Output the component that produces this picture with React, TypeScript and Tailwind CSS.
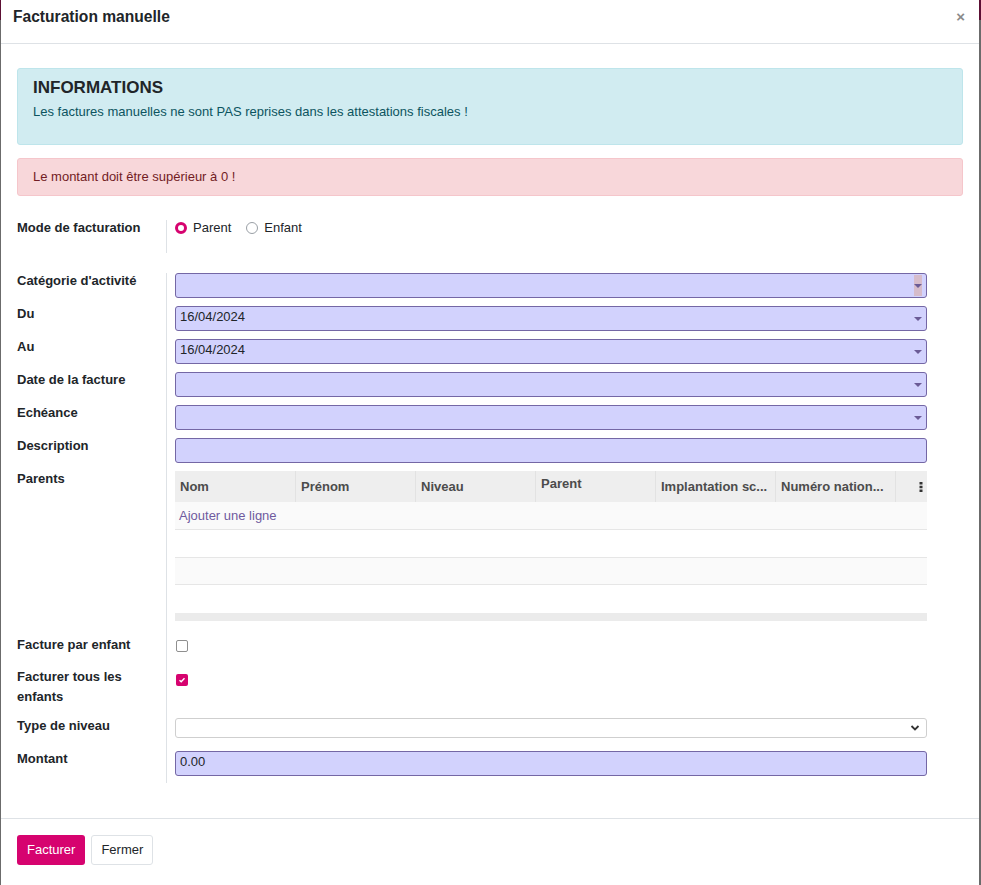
import React from 'react';

const font = { fontFamily: '"Liberation Sans", Arial, Helvetica, sans-serif' };

const Caret = ({ highlight }: { highlight?: boolean }) => (
  <div
    className={`absolute right-[4px] top-[1px] bottom-[1px] w-[8px] flex items-center justify-center ${
      highlight ? 'bg-[#d6bccb]' : ''
    }`}
  >
    <div className="w-0 h-0 border-l-[4px] border-r-[4px] border-t-[4px] border-l-transparent border-r-transparent border-t-[#6b5b96]" />
  </div>
);

const Field = ({ value, caret, highlight }: { value?: string; caret?: boolean; highlight?: boolean }) => (
  <div className="relative h-[25px] w-full rounded-[3px] border border-[#7467a5] bg-[#d2d2fd] pl-[4px] pt-[2px] text-[13px] leading-[15px] text-[#212529]">
    {value}
    {caret && <Caret highlight={highlight} />}
  </div>
);

const Row = ({
  label,
  h,
  children,
}: {
  label: React.ReactNode;
  h: string;
  children?: React.ReactNode;
}) => (
  <div className={`flex ${h}`}>
    <div className="w-[150px] shrink-0 border-r border-[#dee2e6] pr-2 text-[13px] font-bold text-[#212529] leading-[15px]">
      {label}
    </div>
    <div className="w-[760px] pl-2">{children}</div>
  </div>
);

const columns = ['Nom', 'Prénom', 'Niveau', 'Parent', 'Implantation sc...', 'Numéro nation...'];

const ParentsTable = () => (
  <div className="w-[752px]">
    <div className="flex h-[31px] bg-[#eeeeee] text-[13px] font-bold text-[#4c4c4c]">
      {columns.map((c, i) => (
        <div
          key={c}
          className={`w-[120px] pl-[5px] flex ${c === 'Parent' ? 'items-start pt-[5px] leading-[15px]' : 'items-center'} ${
            i > 0 ? 'border-l border-[#e2e2e2]' : ''
          }`}
        >
          {c}
        </div>
      ))}
      <div className="w-[32px] border-l border-[#e2e2e2] flex items-center justify-end pr-[4px]">
        <svg width="4" height="12" viewBox="0 0 4 12">
          <rect x="0.5" y="1" width="3" height="2.5" fill="#333" />
          <rect x="0.5" y="4.75" width="3" height="2.5" fill="#333" />
          <rect x="0.5" y="8.5" width="3" height="2.5" fill="#333" />
        </svg>
      </div>
    </div>
    <div className="h-[28px] bg-[#fafafa] border-b border-[#e6e6e6] flex items-center pl-[4px] text-[13px] text-[#6f5a9e]">
      Ajouter une ligne
    </div>
    <div className="h-[28px] bg-white border-b border-[#e6e6e6]" />
    <div className="h-[27px] bg-[#fafafa] border-b border-[#e6e6e6]" />
    <div className="h-[28px] bg-white" />
    <div className="h-[8px] bg-[#ebebeb]" />
  </div>
);

const Checkbox = ({ checked }: { checked?: boolean }) =>
  checked ? (
    <div className="w-[12px] h-[12px] rounded-[2px] bg-[#d6036f] flex items-center justify-center">
      <svg width="8" height="8" viewBox="0 0 8 8">
        <path d="M1.5 4.2 L3.2 5.8 L6.5 2.3" stroke="#fff" strokeWidth="1.4" fill="none" />
      </svg>
    </div>
  ) : (
    <div className="w-[12px] h-[12px] rounded-[2px] border border-[#8f8f8f] bg-white" />
  );

const App: React.FC = () => {
  return (
    <div className="relative w-[981px] h-[885px] bg-[#6b6b6b] overflow-hidden" style={font}>
      <div className="absolute top-0 left-0 right-0 h-[20px] bg-[#5c0f34]" />
      <div className="relative ml-[1px] w-[978px] h-[885px] bg-white flex flex-col">
        {/* header */}
        <div className="h-[44px] shrink-0 border-b border-[#dee2e6] flex items-start justify-between pl-3 pr-[14px] pt-[7px]">
          <h4 className="text-[15.6px] font-bold leading-[20px] text-[#212529]">Facturation manuelle</h4>
          <span className="text-[15px] font-bold text-[#8a8a8a] leading-[20px]">×</span>
        </div>

        {/* body */}
        <div className="flex-1 px-4 pt-6">
          <div className="rounded-[3px] border border-[#bee5eb] bg-[#d1ecf1] px-[15px] pt-[8px] pb-[22px]">
            <div className="text-[17px] font-bold leading-[22px] text-[#212529]">INFORMATIONS</div>
            <p className="mt-[3px] text-[13px] leading-5 text-[#0c5460]">
              Les factures manuelles ne sont PAS reprises dans les attestations fiscales !
            </p>
          </div>

          <div className="mt-[13px] rounded-[3px] border border-[#f5c6cb] bg-[#f8d7da] px-[15px] py-[8px] text-[13px] leading-5 text-[#721c24]">
            Le montant doit être supérieur à 0 !
          </div>

          <div className="mt-[24px]">
            <Row label="Mode de facturation" h="h-[33px]">
              <div className="flex items-center h-[15px] text-[13px] text-[#212529]">
                <div className="w-[12px] h-[12px] rounded-full border-[3.5px] border-[#d6036f] bg-white mt-[1px]" />
                <span className="ml-[6px]">Parent</span>
                <div className="ml-[15px] w-[12px] h-[12px] rounded-full border border-[#9aa0a6] bg-white mt-[1px]" />
                <span className="ml-[6px]">Enfant</span>
              </div>
            </Row>
          </div>

          <div className="mt-[20px]">
            <Row label="Catégorie d'activité" h="h-[33px]">
              <Field caret highlight />
            </Row>
            <Row label="Du" h="h-[33px]">
              <Field value="16/04/2024" caret />
            </Row>
            <Row label="Au" h="h-[33px]">
              <Field value="16/04/2024" caret />
            </Row>
            <Row label="Date de la facture" h="h-[33px]">
              <Field caret />
            </Row>
            <Row label="Echéance" h="h-[33px]">
              <Field caret />
            </Row>
            <Row label="Description" h="h-[33px]">
              <Field />
            </Row>
            <Row label="Parents" h="h-[166px]">
              <ParentsTable />
            </Row>
            <Row label="Facture par enfant" h="h-[30px]">
              <div className="pt-[3px] pl-[1px]">
                <Checkbox />
              </div>
            </Row>
            <Row label={<div className="leading-[20px]">Facturer tous les enfants</div>} h="h-[51px]">
              <div className="pt-[7px] pl-[1px]">
                <Checkbox checked />
              </div>
            </Row>
            <Row label="Type de niveau" h="h-[33px]">
              <div className="relative h-[20px] w-full rounded-[3px] border border-[#cfcfcf] bg-white">
                <svg
                  className="absolute right-[6px] top-[5px]"
                  width="10"
                  height="8"
                  viewBox="0 0 10 8"
                >
                  <path d="M1.5 2 L5 5.5 L8.5 2" stroke="#333" strokeWidth="1.8" fill="none" />
                </svg>
              </div>
            </Row>
            <Row label="Montant" h="h-[32px]">
              <Field value="0.00" />
            </Row>
          </div>
        </div>

        {/* footer */}
        <div className="h-[67px] shrink-0 border-t border-[#dee2e6] px-4 pt-4 flex gap-[6px]">
          <button className="h-[30px] px-[10px] rounded-[3px] bg-[#d6036f] text-white text-[13px]">
            Facturer
          </button>
          <button className="h-[30px] px-[9px] rounded-[3px] border border-[#dee2e6] bg-white text-[#212529] text-[13px]">
            Fermer
          </button>
        </div>
      </div>
    </div>
  );
};

export default App;
